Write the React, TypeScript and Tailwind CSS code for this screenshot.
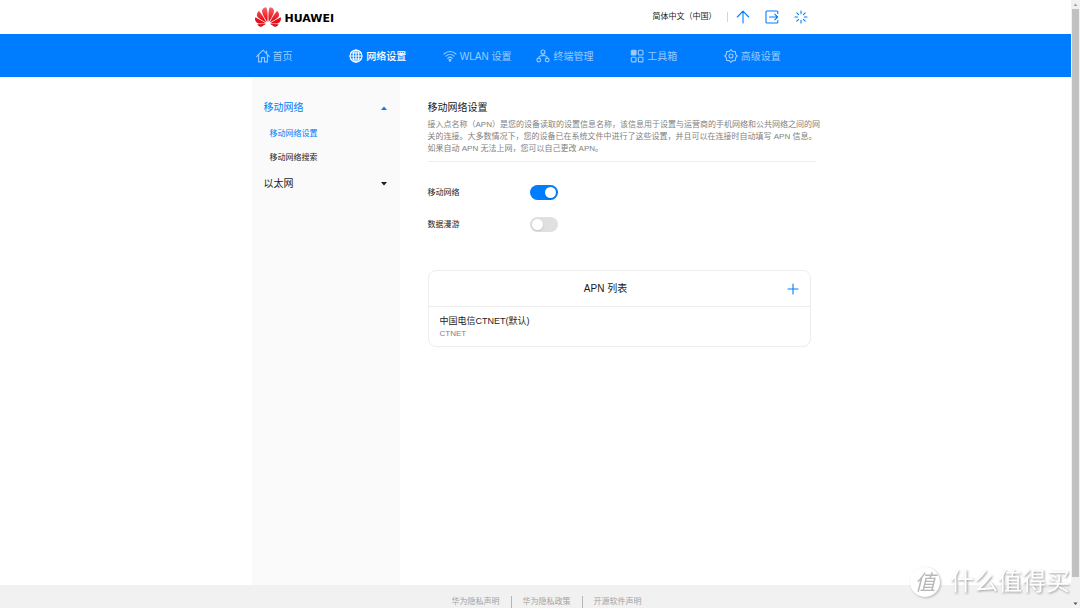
import { useState } from 'react';
import type { ReactNode } from 'react';
import { SiHuawei } from 'react-icons/si';

const stroke = {
  fill: 'none',
  stroke: 'currentColor',
  strokeWidth: 1.1,
  strokeLinecap: 'round' as const,
  strokeLinejoin: 'round' as const,
};

function Icon({ children }: { children: ReactNode }) {
  return (
    <svg viewBox="0 0 14 14" className="h-3.5 w-3.5 shrink-0" aria-hidden="true" {...stroke}>
      {children}
    </svg>
  );
}

const NAV = [
  {
    label: '首页',
    icon: <path d="M.6 7.6 7 1.2l6.4 6.4M2.6 6v6.9h2.9V8.6h3v4.3h2.9V6M10.6 2v2.2" />,
  },
  {
    label: '网络设置',
    icon: (
      <>
        <circle cx="7" cy="7" r="6" />
        <ellipse cx="7" cy="7" rx="2.8" ry="6" />
        <path d="M1 7h12M7 1v12M1.9 4h10.2M1.9 10h10.2" />
      </>
    ),
  },
  {
    label: 'WLAN 设置',
    icon: (
      <>
        <path d="M1 5c3.5-3.4 8.5-3.400 12 0M2.900 7.200c2.400-2.300 5.800-2.300 8.200 0M4.800 9.300c1.300-1.300 3.100-1.300 4.400 0" />
        <circle cx="7" cy="11.300" r=".9" fill="currentColor" />
      </>
    ),
  },
  {
    label: '终端管理',
    icon: (
      <>
        <circle cx="7" cy="3" r="2" />
        <circle cx="2.800" cy="11" r="1.900" />
        <circle cx="11.200" cy="11" r="1.900" />
        <path d="M7 5v1.500M2.800 9c0-1.600 1-2 2-2.200C5.800 6.600 6.500 6.600 7 6.500c.5.1 1.200.1 2.200.3 1 .2 2 .6 2 2.200" />
      </>
    ),
  },
  {
    label: '工具箱',
    icon: (
      <>
        <rect x="1.300" y="1.300" width="4.700" height="4.700" rx=".8" fill="currentColor" />
        <rect x="8.300" y="1.300" width="4.700" height="4.700" rx="1" />
        <rect x="1.300" y="8.200" width="4.700" height="4.700" rx="1" />
        <rect x="8.300" y="8.200" width="4.700" height="4.700" rx="1" />
      </>
    ),
  },
  {
    label: '高级设置',
    icon: (
      <>
        <path d="M7 .7 8.600 2.400 11.400 2.600 11.600 5.400 13.300 7 11.600 8.600 11.400 11.400 8.600 11.600 7 13.300 5.400 11.600 2.600 11.400 2.400 8.600.7 7 2.400 5.400 2.600 2.600 5.400 2.400z" />
        <circle cx="7" cy="7" r="2" />
      </>
    ),
  },
];

const FOOTER_LINKS = ['华为隐私声明', '华为隐私政策', '开源软件声明'];

function Logo() {
  return (
    <a href="#" className="flex items-center gap-1">
      <svg viewBox="0 0 26 26" className="h-[26px] w-[26px]" aria-hidden="true">
        <defs>
          <linearGradient id="petal" x1="0" y1="0" x2="0" y2="1">
            <stop offset="0" stopColor="#f7686b" />
            <stop offset="0.6" stopColor="#e8151f" />
            <stop offset="1" stopColor="#d80613" />
          </linearGradient>
        </defs>
        <SiHuawei size={26} fill="url(#petal)" />
      </svg>
      <span className="pt-1 font-['DejaVu_Sans',sans-serif] text-[11px] leading-4 font-bold text-black">HUAWEI</span>
    </a>
  );
}

function Header() {
  return (
    <header className="mx-auto flex h-[34px] w-full max-w-[568px] items-center justify-between pr-3 pl-[3px]">
      <Logo />
      <div className="flex items-center">
        <button type="button" className="text-[8px]">简体中文（中国）</button>
        <span className="ml-2.5 h-2.5 w-px bg-gray-300" />
        <div className="ml-2 flex items-center gap-[15px] text-[#007dff]">
          <button type="button" aria-label="更新">
            <svg viewBox="0 0 14 14" className="h-3.5 w-3.5" {...stroke}>
              <path d="M7 13V1.300M1.300 7 7 1.200 12.700 7" />
            </svg>
          </button>
          <button type="button" aria-label="退出">
            <svg viewBox="0 0 14 14" className="h-3.5 w-3.5" {...stroke}>
              <path d="M12.800 3.500V2q0-1-1-1H2Q1 1 1 2v10q0 1 1 1h9.800q1 0 1-1v-1.500M4.500 7h8M9.800 4.200 12.600 7 9.800 9.800" />
            </svg>
          </button>
          <button type="button" aria-label="重启">
            <svg viewBox="0 0 14 14" className="h-3.5 w-3.5" {...stroke}>
              <path d="M7 1v2.600M7 10.400V13M1 7h2.600M10.400 7H13M2.800 2.800l1.800 1.800M9.400 9.400l1.800 1.800M2.800 11.200l1.800-1.800M9.400 4.600l1.800-1.800" />
            </svg>
          </button>
        </div>
      </div>
    </header>
  );
}

function NavBar() {
  return (
    <nav className="bg-[#007dff]">
      <div className="mx-auto grid h-[43px] w-full max-w-[568px] grid-cols-6 items-center pr-0.5 pl-1">
        {NAV.map((item) => (
          <a
            key={item.label}
            href="#"
            className={`flex items-center gap-[3px] text-[10px] whitespace-nowrap ${
              item.label === '网络设置' ? 'font-medium text-white' : 'text-[#99cbff]'
            }`}
          >
            <Icon>{item.icon}</Icon>
            <span className="pt-0.5">{item.label}</span>
          </a>
        ))}
      </div>
    </nav>
  );
}

function Sidebar() {
  return (
    <aside className="w-[148px] shrink-0 bg-[#fafafa] px-3 pt-[23px]">
      <button type="button" className="flex w-full items-center justify-between text-[10px] leading-4 text-[#007dff]">
        移动网络
        <svg viewBox="0 0 8 4" className="h-1 w-2" fill="currentColor"><path d="M1 4 4 .5 7 4z" /></svg>
      </button>
      <ul className="flex flex-col gap-3 py-3 pl-1.5 text-[8px] leading-3">
        <li><a href="#" className="block text-[#007dff]">移动网络设置</a></li>
        <li><a href="#" className="block">移动网络搜索</a></li>
      </ul>
      <button type="button" className="flex w-full items-center justify-between text-[10px] leading-4">
        以太网
        <svg viewBox="0 0 8 4" className="h-1 w-2" fill="currentColor"><path d="M1 0h6L4 3.500z" /></svg>
      </button>
    </aside>
  );
}

function Toggle({ label, initial }: { label: string; initial: boolean }) {
  const [on, setOn] = useState(initial);

  return (
    <label className="flex h-4 cursor-pointer items-center text-[8px]">
      <span className="w-[102px] pt-0.5">{label}</span>
      <input
        type="checkbox"
        role="switch"
        checked={on}
        onChange={(e) => setOn(e.target.checked)}
        className="peer sr-only"
      />
      <span className="flex h-[15px] w-7 items-center rounded-full bg-[#e0e0e0] px-0.5 peer-checked:justify-end peer-checked:bg-[#007dff]">
        <span className="h-[11px] w-[11px] rounded-full bg-white shadow-sm" />
      </span>
    </label>
  );
}

function ApnList() {
  return (
    <section className="mt-[38px] mr-[5px] rounded-lg border border-[#ededed]">
      <div className="flex h-9 items-center border-b border-[#ededed] pr-[11px] pl-2.5">
        <h2 className="flex-1 pr-3.5 text-center text-[10px]">APN 列表</h2>
        <button type="button" aria-label="添加" className="text-[#007dff]">
          <svg viewBox="0 0 12 12" className="h-3 w-3" {...stroke}><path d="M6 1v10M1 6h10" /></svg>
        </button>
      </div>
      <a href="#" className="block px-[11px] pt-2 pb-1.5">
        <p className="text-[9px] leading-[13px]">中国电信CTNET(默认)</p>
        <p className="text-[8px] leading-3 text-[#7f7f7f]">CTNET</p>
      </a>
    </section>
  );
}

function Footer() {
  return (
    <footer className="flex h-[23px] items-start justify-center bg-[#f1f1f1] pt-[11px] pl-[22px] text-[8px] leading-3 text-[#a3a3a3]">
      {FOOTER_LINKS.map((label, i) => (
        <a key={label} href="#" className={i > 0 ? 'ml-[11px] border-l border-[#b5b5b5] pl-[11px]' : ''}>
          {label}
        </a>
      ))}
    </footer>
  );
}

// Page scroll track with its arrows and thumb
function ScrollTrack() {
  return (
    <div className="flex w-[9px] shrink-0 flex-col items-center bg-[#f1f1f1]" aria-hidden="true">
      <svg viewBox="0 0 9 9" className="h-[9px] w-[9px]" fill="#a3a3a3"><path d="M2.500 6h4l-2-2.500z" /></svg>
      <div className="w-[7px] flex-1 bg-[#c1c1c1]" />
      <svg viewBox="0 0 9 9" className="mt-[22px] h-[9px] w-[9px]" fill="#505050"><path d="M2.500 3.500h4l-2 2.500z" /></svg>
    </div>
  );
}

function Watermark() {
  return (
    <div className="pointer-events-none absolute right-2.5 bottom-2.5 flex items-center gap-2.5 text-white select-none">
      <span className="flex h-[30px] w-[30px] items-center justify-center rounded-full bg-white text-[21px] leading-none text-[#b8b8b8] italic drop-shadow-[1px_1px_1px_#b5b5b5]">
        值
      </span>
      <span className="text-2xl leading-8 drop-shadow-[1px_1px_1px_#999999]">什么值得买</span>
    </div>
  );
}

export default function App() {
  return (
    <div className="relative flex min-h-screen bg-white font-['Liberation_Sans','Noto_Sans_CJK_SC',sans-serif] text-[#1a1a1a]">
      <div className="flex min-w-0 flex-1 flex-col">
        <Header />
        <NavBar />
        <div className="mx-auto flex w-full max-w-[568px] flex-1">
          <Sidebar />
          <main className="min-w-0 flex-1 pt-[23px] pr-1 pl-7">
            <div className="border-b border-[#ededed] pb-1.5">
              <h1 className="text-[10px] leading-4">移动网络设置</h1>
              <p className="mt-[3px] -mr-2 text-[8px] leading-3 text-[#7f7f7f]">
                接入点名称（APN）是您的设备读取的设置信息名称，该信息用于设置与运营商的手机网络和公共网络之间的网关的连接。大多数情况下，您的设备已在系统文件中进行了这些设置，并且可以在连接时自动填写 APN 信息。
                <br />
                如果自动 APN 无法上网，您可以自己更改 APN。
              </p>
            </div>
            <div className="mt-[22px] flex flex-col gap-4">
              <Toggle label="移动网络" initial={true} />
              <Toggle label="数据漫游" initial={false} />
            </div>
            <ApnList />
          </main>
        </div>
        <Footer />
      </div>
      <ScrollTrack />
      <Watermark />
    </div>
  );
}
